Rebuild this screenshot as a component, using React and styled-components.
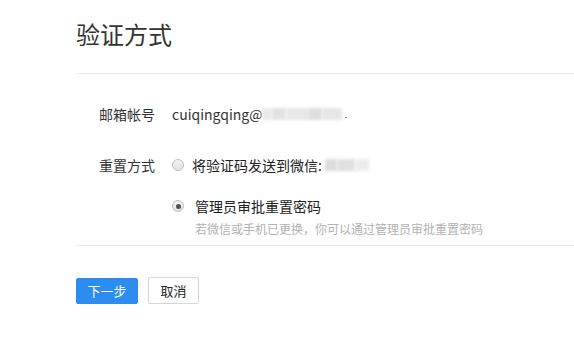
import React from "react"
import styled, { createGlobalStyle } from "styled-components"

const GlobalStyle = createGlobalStyle`
  *, ::after, ::before {
    box-sizing: border-box;
  }
  body {
    margin: 0;
    background: #fff;
    font-family: "Microsoft YaHei", "Noto Sans CJK SC", "Noto Sans", sans-serif;
    color: #333;
  }
`

const Page = styled.main`
  padding: 18px 0 0 76px;
  width: 100vw;
  height: 100vh;
  overflow: hidden;
`

const Title = styled.h1`
  margin: 0;
  font-size: 24px;
  font-weight: normal;
  line-height: 32px;
  color: #333;
`

const Divider = styled.hr`
  margin: ${p => p.$top || 0}px 0 0;
  border: none;
  border-top: 1px solid #ebebeb;
`

const Form = styled.section`
  padding-top: 30px;
  display: flex;
  flex-direction: column;
  gap: 31px;
`

const Row = styled.div`
  display: flex;
  align-items: flex-start;
`

const Label = styled.div`
  width: 79px;
  text-align: right;
  font-size: 14px;
  line-height: 20px;
  flex-shrink: 0;
`

const Value = styled.div`
  margin-left: 17px;
  font-size: 14px;
  line-height: 20px;
  display: flex;
  align-items: center;
`

const Options = styled.div`
  margin-left: 17px;
  display: flex;
  flex-direction: column;
  gap: 21px;
`

const Option = styled.label`
  display: flex;
  align-items: center;
  font-size: 14px;
  line-height: 20px;
  color: #222;
`

const Radio = styled.span`
  width: 12px;
  height: 12px;
  border-radius: 50%;
  border: 1px solid #bdbdbd;
  background: linear-gradient(#f4f4f4, #e2e2e2);
  margin-right: ${p => p.$gap}px;
  display: flex;
  align-items: center;
  justify-content: center;
  flex-shrink: 0;
  &::after {
    content: "";
    width: 5px;
    height: 5px;
    border-radius: 50%;
    background: #505050;
    display: ${p => (p.$checked ? "block" : "none")};
  }
`

const Hint = styled.div`
  margin: 4px 0 0 23px;
  font-size: 12px;
  line-height: 18px;
  color: #b2b2b2;
`

const Blur = styled.span`
  display: inline-block;
  width: ${p => p.$w}px;
  height: 12px;
  background: ${p => p.$c || "#e4e4e4"};
  filter: blur(1.5px);
`

const Redacted = styled.span`
  display: inline-flex;
  align-items: center;
  margin-left: ${p => p.$left || 0}px;
`

const Actions = styled.div`
  margin-top: 31px;
  display: flex;
  align-items: center;
  gap: 10px;
`

const Button = styled.button`
  width: ${p => (p.$primary ? 62 : 51)}px;
  height: ${p => (p.$primary ? 26 : 27)}px;
  padding: 0;
  font-family: inherit;
  font-size: 13px;
  border-radius: 2px;
  border: 1px solid ${p => (p.$primary ? "#2d8cf0" : "#d6d6d6")};
  background: ${p => (p.$primary ? "#2d8cf0" : "#fff")};
  color: ${p => (p.$primary ? "#fff" : "#222")};
  cursor: pointer;
`

const App = () => (
  <Page>
    <GlobalStyle />
    <Title>验证方式</Title>
    <Divider $top={23} />
    <Form>
      <Row>
        <Label>邮箱帐号</Label>
        <Value>
          cuiqingqing@
          <Redacted>
            <Blur $w={10} $c="#eaeaea" />
            <Blur $w={14} $c="#e2e2e2" />
            <Blur $w={22} $c="#e8e8e8" />
            <Blur $w={14} $c="#dedede" />
            <Blur $w={20} $c="#e6e6e6" />
          </Redacted>
          <span style={{ fontSize: 10, marginLeft: 2 }}>.</span>
        </Value>
      </Row>
      <Row>
        <Label>重置方式</Label>
        <Options>
          <Option>
            <Radio $gap={8} />
            将验证码发送到微信:
            <Redacted $left={3}>
              <Blur $w={12} $c="#dcdcdc" />
              <Blur $w={18} $c="#e0e0e0" />
              <Blur $w={14} $c="#ededed" />
            </Redacted>
          </Option>
          <div>
            <Option>
              <Radio $checked $gap={11} />
              管理员审批重置密码
            </Option>
            <Hint>若微信或手机已更换，你可以通过管理员审批重置密码</Hint>
          </div>
        </Options>
      </Row>
    </Form>
    <Divider $top={7} />
    <Actions>
      <Button $primary>下一步</Button>
      <Button>取消</Button>
    </Actions>
  </Page>
)

export default App
